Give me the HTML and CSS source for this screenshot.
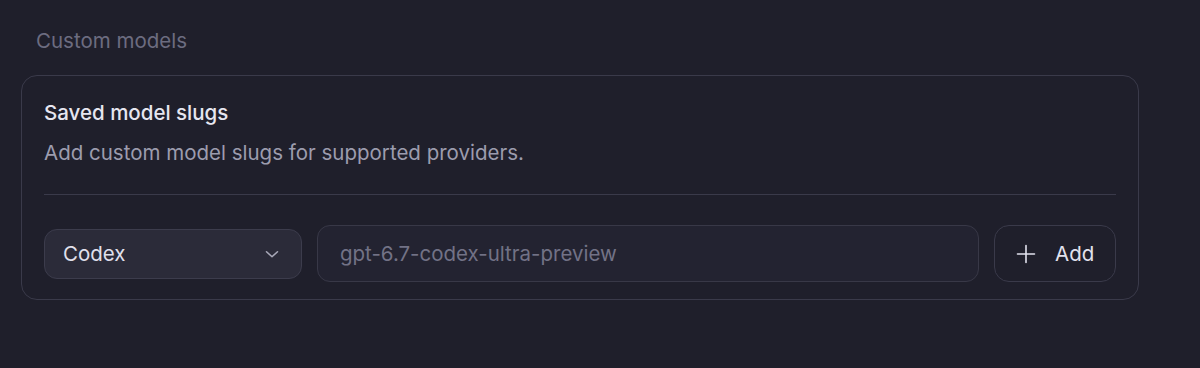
FILE: index.html
```html
<!DOCTYPE html>
<html lang="en">
<head>
  <meta charset="UTF-8">
  <title>Custom models</title>
  <link rel="stylesheet" href="styles.css">
</head>
<body>
  <main class="page">
    <h2 class="section-label">Custom models</h2>
    <div class="card">
      <h3 class="card-title">Saved model slugs</h3>
      <p class="card-desc">Add custom model slugs for supported providers.</p>
      <div class="divider"></div>
      <div class="row">
        <div class="select">
          <span>Codex</span>
          <svg class="chevron" width="22" height="22" viewBox="0 0 24 24" fill="none" stroke="currentColor" stroke-width="1.7" stroke-linecap="round" stroke-linejoin="round"><path d="M6 9.5l6 5.5 6-5.5"/></svg>
        </div>
        <input class="slug-input" type="text" placeholder="gpt-6.7-codex-ultra-preview">
        <button class="button-add">
          <svg width="24" height="24" viewBox="0 0 24 24" fill="none" stroke="currentColor" stroke-width="1.6" stroke-linecap="round"><path d="M12 3.5v17M3.5 12h17"/></svg>
          <span>Add</span>
        </button>
      </div>
    </div>
  </main>
</body>
</html>
```

FILE: styles.css
```css
html, body {
  margin: 0;
  background-color: #1f1f2b;
}
body {
  font-family: Inter, 'Noto Sans', sans-serif;
  color: #e4e4ee;
}
.page {
  padding: 28px 61px 0 21px;
}
.section-label {
  margin: 0 0 22px 15px;
  font-size: 20.5px;
  font-weight: 400;
  line-height: 25px;
  color: #6c6c80;
}
.card {
  border: 1px solid #3a3a4a;
  border-radius: 16px;
  padding: 24px 22px 17px;
}
.card-title {
  margin: 0;
  font-size: 20.5px;
  font-weight: 500;
  line-height: 26px;
  color: #e6e6f0;
}
.card-desc {
  margin: 14px 0 0;
  font-size: 20.5px;
  line-height: 26px;
  color: #9c9cae;
}
.divider {
  height: 1px;
  margin-top: 28px;
  background-color: #3a3a4a;
}
.row {
  display: flex;
  align-items: center;
  gap: 15px;
  margin-top: 30px;
}
.select {
  box-sizing: border-box;
  display: flex;
  align-items: center;
  justify-content: space-between;
  width: 258px;
  height: 50px;
  padding: 0 18px 0 18px;
  border: 1px solid #3c3c4c;
  border-radius: 13px;
  background-color: #2b2b39;
  font-size: 20.5px;
  color: #e0e0ec;
}
.chevron {
  color: #a8a8b8;
}
.slug-input {
  box-sizing: border-box;
  flex: 1;
  height: 57px;
  padding: 0 22px;
  border: 1px solid #383847;
  border-radius: 13px;
  background-color: #232331;
  font-family: inherit;
  font-size: 20.5px;
  color: #e4e4ee;
  outline: 0;
}
.slug-input::placeholder {
  color: #727286;
}
.button-add {
  box-sizing: border-box;
  display: flex;
  align-items: center;
  gap: 17px;
  width: 122px;
  height: 57px;
  padding: 0 0 0 19px;
  border: 1px solid #3a3a4a;
  border-radius: 15px;
  background-color: #1f1f2b;
  font-family: inherit;
  font-size: 20.5px;
  font-weight: 400;
  color: #e2e2ee;
  cursor: pointer;
}
```
